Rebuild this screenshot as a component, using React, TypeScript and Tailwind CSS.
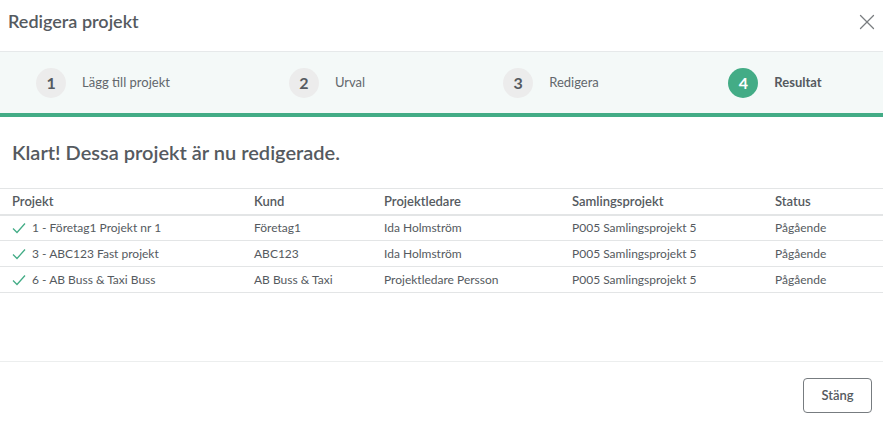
import { X } from 'lucide-react'

const steps = [
  { n: 1, label: 'Lägg till projekt' },
  { n: 2, label: 'Urval' },
  { n: 3, label: 'Redigera' },
  { n: 4, label: 'Resultat', active: true },
]

const rows = [
  { projekt: '1 - Företag1 Projekt nr 1', kund: 'Företag1', ledare: 'Ida Holmström', samling: 'P005 Samlingsprojekt 5', status: 'Pågående' },
  { projekt: '3 - ABC123 Fast projekt', kund: 'ABC123', ledare: 'Ida Holmström', samling: 'P005 Samlingsprojekt 5', status: 'Pågående' },
  { projekt: '6 - AB Buss & Taxi Buss', kund: 'AB Buss & Taxi', ledare: 'Projektledare Persson', samling: 'P005 Samlingsprojekt 5', status: 'Pågående' },
]

function Check() {
  return (
    <svg width="14" height="12" viewBox="0 0 14 12" className="shrink-0">
      <path d="M1 6.5 L5 10.5 L13 1.5" fill="none" stroke="#43ac86" strokeWidth="1.3" />
    </svg>
  )
}

export default function App() {
  return (
    <div className="w-[883px] h-[424px] bg-white flex flex-col text-[#555a60] font-['Lato','Liberation_Sans',sans-serif]">
      {/* header */}
      <div className="h-[52px] shrink-0 flex items-center justify-between pl-2 pr-[3px] border-b border-[#e6e9ea]">
        <h1 className="text-[18px] font-semibold -mt-[9px]">Redigera projekt</h1>
        <button className="text-[#7a7d80] -mt-[7px]">
          <X className="w-[26px] h-[26px]" strokeWidth={1.2} />
        </button>
      </div>

      {/* stepper */}
      <div className="h-[61px] shrink-0 bg-[#f4f9f8] grid grid-cols-[repeat(4,206px)] gap-x-[18px] items-center">
        {steps.map((s) => (
          <div key={s.n} className="flex items-center justify-center gap-4">
            <div
              className={
                s.active
                  ? 'w-[30px] h-[30px] rounded-full bg-[#43ac86] text-white flex items-center justify-center text-[16px] font-bold'
                  : 'w-[30px] h-[30px] rounded-full bg-[#ececec] text-[#555a60] flex items-center justify-center text-[16px] font-bold'
              }
            >
              {s.n}
            </div>
            <span className={s.active ? 'text-[13px] font-bold' : 'text-[13px] text-[#62676c]'}>{s.label}</span>
          </div>
        ))}
      </div>
      <div className="h-[4px] shrink-0 bg-[#43ac86]" />

      {/* body */}
      <div className="flex-1 flex flex-col">
        <h2 className="text-[20px] font-semibold pl-3 pt-[22px] pb-[23px] leading-[26px]">
          Klart! Dessa projekt är nu redigerade.
        </h2>
        <table className="w-full text-left border-collapse">
          <thead>
            <tr className="border-t border-[#e3e5e6] border-b-2 border-b-[#e3e5e6] h-[26px]">
              <th className="pl-3 w-[254px] text-[13px] font-semibold">Projekt</th>
              <th className="w-[130px] text-[13px] font-semibold">Kund</th>
              <th className="w-[188px] text-[13px] font-semibold">Projektledare</th>
              <th className="w-[203px] text-[13px] font-semibold">Samlingsprojekt</th>
              <th className="text-[13px] font-semibold">Status</th>
            </tr>
          </thead>
          <tbody className="text-[12px]">
            {rows.map((r) => (
              <tr key={r.projekt} className="border-b border-[#e3e5e6] h-[26px]">
                <td className="pl-3">
                  <div className="flex items-center gap-[6px]">
                    <Check />
                    {r.projekt}
                  </div>
                </td>
                <td>{r.kund}</td>
                <td>{r.ledare}</td>
                <td>{r.samling}</td>
                <td>{r.status}</td>
              </tr>
            ))}
          </tbody>
        </table>
      </div>

      {/* footer */}
      <div className="h-[63px] shrink-0 border-t border-[#eceeee] flex items-start justify-end pr-[11px] pt-[16px]">
        <button className="h-[35px] w-[69px] border border-[#777c80] rounded-[4px] text-[13px] font-semibold">
          Stäng
        </button>
      </div>
    </div>
  )
}
